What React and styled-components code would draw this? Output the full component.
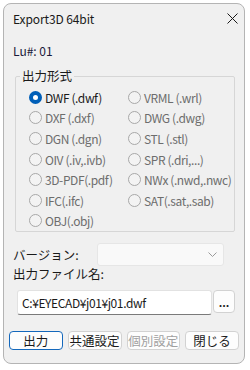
import React from 'react';
import styled, { createGlobalStyle } from 'styled-components';

const GlobalStyle = createGlobalStyle`
    body {
        margin: 0;
        background: #ffffff;
        font-family: "Noto Sans CJK JP", "Noto Sans", sans-serif;
        color: #1a1a1a;
    }
`;

const formats = [
    ['DWF (.dwf)', 'VRML (.wrl)'],
    ['DXF (.dxf)', 'DWG (.dwg)'],
    ['DGN (.dgn)', 'STL (.stl)'],
    ['OIV (.iv,.ivb)', 'SPR (.dri,...)'],
    ['3D-PDF(.pdf)', 'NWx (.nwd,.nwc)'],
    ['IFC(.ifc)', 'SAT(.sat,.sab)'],
    ['OBJ(.obj)'],
];

const CloseIcon = () => (
    <svg width="11" height="11" viewBox="0 0 11 11">
        <path d="M0.5 0.5 L10.5 10.5 M10.5 0.5 L0.5 10.5" stroke="#1a1a1a" strokeWidth="1" />
    </svg>
);

const Chevron = () => (
    <svg width="9" height="5" viewBox="0 0 9 5">
        <path d="M0.5 0.5 L4.5 4.5 L8.5 0.5" fill="none" stroke="#9a9a9a" strokeWidth="1" />
    </svg>
);

const App = () => (
    <>
        <GlobalStyle />
        <Window>
            <TitleBar>
                <Title>Export3D 64bit</Title>
                <CloseIcon />
            </TitleBar>
            <Body>
                <LuLine>Lu#: 01</LuLine>
                <Group>
                    <Legend>出力形式</Legend>
                    <RadioGrid>
                        {formats.flat().map((label, i) => (
                            <RadioItem key={label} $active={i === 0}>
                                <RadioDot $checked={i === 0} />
                                {label}
                            </RadioItem>
                        ))}
                    </RadioGrid>
                </Group>
                <VersionRow>
                    <FieldLabel>バージョン:</FieldLabel>
                    <Combo>
                        <Chevron />
                    </Combo>
                </VersionRow>
                <FieldLabel>出力ファイル名:</FieldLabel>
                <PathRow>
                    <PathInput>C:¥EYECAD¥j01¥j01.dwf</PathInput>
                    <BrowseButton>...</BrowseButton>
                </PathRow>
                <ButtonRow>
                    <Button $primary>出力</Button>
                    <Button>共通設定</Button>
                    <Button $disabled>個別設定</Button>
                    <Button>閉じる</Button>
                </ButtonRow>
            </Body>
        </Window>
    </>
);

const Window = styled.div`
    margin: 3px 0 0 3px;
    width: 242px;
    height: 361px;
    box-sizing: border-box;
    border: 1px solid #b4b4b4;
    border-radius: 8px;
    background: #f0f0f0;
    display: flex;
    flex-direction: column;
    overflow: hidden;
`;

const TitleBar = styled.div`
    height: 28px;
    display: flex;
    align-items: center;
    justify-content: space-between;
    padding: 0 6px 0 9px;
`;

const Title = styled.span`
    font-size: 12px;
    letter-spacing: -0.1px;
`;

const Body = styled.div`
    display: flex;
    flex-direction: column;
    padding: 0 5px 0 9px;
`;

const LuLine = styled.div`
    margin-top: 11px;
    font-size: 12px;
    line-height: 16px;
    color: #1a1a3a;
`;

const Group = styled.fieldset`
    margin: 9px 4px 0 2px;
    padding: 0 0 0 13px;
    border: 1px solid #d6d6d6;
    border-radius: 2px;
`;

const Legend = styled.legend`
    margin-left: -9px;
    padding: 0 2px;
    font-size: 12.5px;
    line-height: 16px;
`;

const RadioGrid = styled.div`
    margin-top: 3px;
    display: grid;
    grid-template-columns: 99px 1fr;
    grid-auto-rows: 20.6px;
`;

const RadioItem = styled.div`
    display: flex;
    align-items: center;
    gap: 2px;
    font-size: 12px;
    letter-spacing: -0.4px;
    white-space: nowrap;
    color: ${({ $active }) => ($active ? '#1a1a1a' : '#6d6d6d')};
`;

const RadioDot = styled.span`
    width: 13px;
    height: 13px;
    margin-right: 1px;
    box-sizing: border-box;
    border-radius: 50%;
    flex: none;
    background: ${({ $checked }) => ($checked ? '#ffffff' : '#f3f3f3')};
    border: ${({ $checked }) => ($checked ? '4px solid #005fb8' : '1px solid #a8a8a8')};
`;

const VersionRow = styled.div`
    margin-top: 11px;
    display: flex;
    align-items: center;
`;

const FieldLabel = styled.div`
    width: 84px;
    font-size: 12.5px;
    line-height: 16px;
    white-space: nowrap;
`;

const Combo = styled.div`
    width: 127px;
    height: 23px;
    box-sizing: border-box;
    border: 1px solid #e6e6e6;
    border-radius: 3px;
    background: #f9f9f9;
    display: flex;
    align-items: center;
    justify-content: flex-end;
    padding-right: 6px;
`;

const PathRow = styled.div`
    margin: 8px 0 0 4px;
    display: flex;
    gap: 1px;
    align-items: flex-start;
`;

const PathInput = styled.div`
    width: 195px;
    height: 25px;
    box-sizing: border-box;
    border: 1px solid #e2e2e2;
    border-bottom: 1px solid #7a7a7a;
    border-radius: 3px;
    background: #ffffff;
    padding-left: 4px;
    font-size: 12px;
    letter-spacing: -0.4px;
    line-height: 23px;
`;

const BrowseButton = styled.div`
    width: 22px;
    height: 23px;
    box-sizing: border-box;
    border: 1px solid #d2d2d2;
    border-radius: 4px;
    background: #fdfdfd;
    font-size: 11px;
    font-weight: bold;
    text-align: center;
    line-height: 22px;
`;

const ButtonRow = styled.div`
    margin: 16px 0 0 -4px;
    display: flex;
    gap: 5px;
`;

const Button = styled.div`
    width: 54px;
    height: 19px;
    box-sizing: border-box;
    border: 1px solid ${({ $primary }) => ($primary ? '#1468bc' : '#d2d2d2')};
    border-radius: 4px;
    background: #fdfdfd;
    font-size: 12.5px;
    line-height: 17px;
    text-align: center;
    white-space: nowrap;
    color: ${({ $disabled }) => ($disabled ? '#a0a0a0' : '#1a1a1a')};
`;

export default App;
